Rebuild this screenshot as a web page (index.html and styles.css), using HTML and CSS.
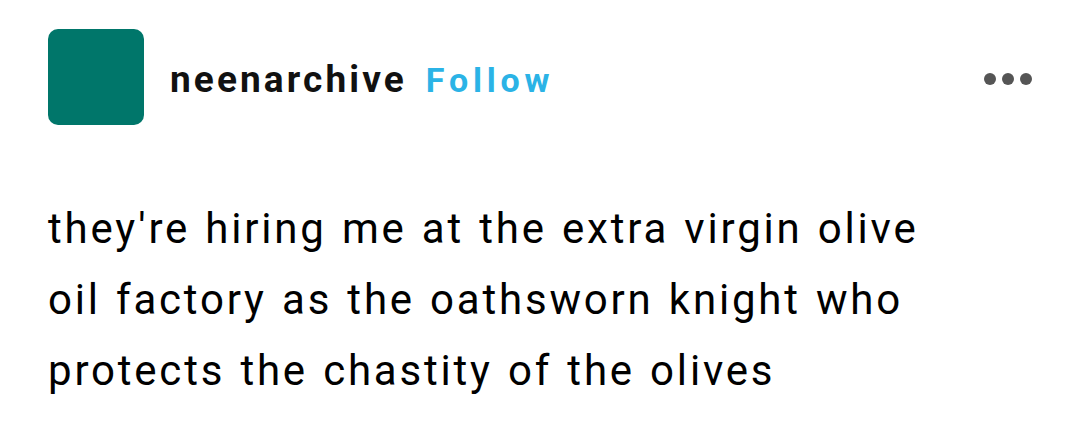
FILE: index.html
```html
<!DOCTYPE html>
<html>
<head>
<meta charset="utf-8">
<link rel="stylesheet" href="styles.css">
</head>
<body>
<article class="post">
  <header class="post-header">
    <div class="avatar"></div>
    <div class="names">
      <span class="username">neenarchive</span>
      <span class="follow">Follow</span>
    </div>
    <div class="more">
      <span class="dot"></span><span class="dot"></span><span class="dot"></span>
    </div>
  </header>
  <p class="post-body">they're hiring me at the extra virgin olive<br>oil factory as the oathsworn knight who<br>protects the chastity of the olives</p>
</article>
</body>
</html>
```

FILE: styles.css
```css
html, body {
  margin: 0;
  padding: 0;
  background: #ffffff;
}
body {
  width: 1080px;
  height: 433px;
  overflow: hidden;
  font-family: Roboto, "Liberation Sans", sans-serif;
  color: #000;
}
.post {
  padding: 29px 0 0 48px;
}
.post-header {
  display: flex;
  align-items: center;
  height: 96px;
}
.avatar {
  width: 96px;
  height: 96px;
  border-radius: 10px;
  background: #00766a;
  flex: none;
}
.names {
  display: flex;
  align-items: baseline;
  margin-left: 26px;
  gap: 19px;
  margin-top: 4px;
}
.username {
  font-size: 37px;
  font-weight: 700;
  color: #111;
  letter-spacing: 3.1px;
}
.follow {
  font-size: 34px;
  font-weight: 700;
  color: #2bb3e6;
  letter-spacing: 4.8px;
}
.more {
  margin-left: auto;
  margin-right: 48px;
  display: flex;
  gap: 6px;
  margin-top: 4px;
}
.dot {
  width: 12px;
  height: 12px;
  border-radius: 50%;
  background: #555;
}
.post-body {
  margin: 68px 0 0 0;
  font-size: 42px;
  line-height: 71px;
  letter-spacing: 2.8px;
  word-spacing: 2px;
  color: #000;
}
```
